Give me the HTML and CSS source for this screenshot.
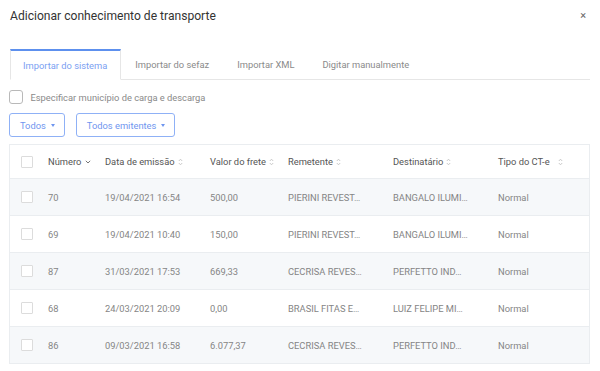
FILE: index.html
```html
<!DOCTYPE html>
<html lang="pt-BR">
<head>
<meta charset="utf-8">
<link rel="stylesheet" href="styles.css">
</head>
<body>
<div class="modal">
  <div class="modal-head">
    <h1 class="title">Adicionar conhecimento de transporte</h1>
    <span class="close">×</span>
  </div>
  <div class="tabs">
    <div class="tab active">Importar do sistema</div>
    <div class="tab">Importar do sefaz</div>
    <div class="tab">Importar XML</div>
    <div class="tab">Digitar manualmente</div>
    <div class="tab-fill"></div>
  </div>
  <label class="check-line"><span class="cb cb-lg"></span><span>Especificar município de carga e descarga</span></label>
  <div class="filters">
    <button class="btn">Todos <span class="caret"></span></button>
    <button class="btn">Todos emitentes <span class="caret"></span></button>
  </div>
  <div class="table">
    <div class="row head">
      <div class="cell c0"><span class="cb"></span></div>
      <div class="cell">Número <svg class="chev" width="6" height="4" viewBox="0 0 6 4"><path d="M0.8 0.8 L3 3 L5.2 0.8" fill="none" stroke="#666" stroke-width="0.9"/></svg></div>
      <div class="cell">Data de emissão <svg class="sort" width="5" height="8" viewBox="0 0 5 8"><path d="M0.8 3 L2.5 1.2 L4.2 3 M0.8 5 L2.5 6.8 L4.2 5" fill="none" stroke="#bdbdbd" stroke-width="0.8"/></svg></div>
      <div class="cell">Valor do frete <svg class="sort" width="5" height="8" viewBox="0 0 5 8"><path d="M0.8 3 L2.5 1.2 L4.2 3 M0.8 5 L2.5 6.8 L4.2 5" fill="none" stroke="#bdbdbd" stroke-width="0.8"/></svg></div>
      <div class="cell">Remetente <svg class="sort" width="5" height="8" viewBox="0 0 5 8"><path d="M0.8 3 L2.5 1.2 L4.2 3 M0.8 5 L2.5 6.8 L4.2 5" fill="none" stroke="#bdbdbd" stroke-width="0.8"/></svg></div>
      <div class="cell">Destinatário <svg class="sort" width="5" height="8" viewBox="0 0 5 8"><path d="M0.8 3 L2.5 1.2 L4.2 3 M0.8 5 L2.5 6.8 L4.2 5" fill="none" stroke="#bdbdbd" stroke-width="0.8"/></svg></div>
      <div class="cell">Tipo do CT-e <svg class="sort sort-wide" width="5" height="8" viewBox="0 0 5 8"><path d="M0.8 3 L2.5 1.2 L4.2 3 M0.8 5 L2.5 6.8 L4.2 5" fill="none" stroke="#bdbdbd" stroke-width="0.8"/></svg></div>
    </div>
    <div class="row odd">
      <div class="cell c0"><span class="cb"></span></div>
      <div class="cell">70</div><div class="cell">19/04/2021 16:54</div><div class="cell">500,00</div>
      <div class="cell">PIERINI REVEST…</div><div class="cell">BANGALO ILUMI…</div><div class="cell">Normal</div>
    </div>
    <div class="row">
      <div class="cell c0"><span class="cb"></span></div>
      <div class="cell">69</div><div class="cell">19/04/2021 10:40</div><div class="cell">150,00</div>
      <div class="cell">PIERINI REVEST…</div><div class="cell">BANGALO ILUMI…</div><div class="cell">Normal</div>
    </div>
    <div class="row odd">
      <div class="cell c0"><span class="cb"></span></div>
      <div class="cell">87</div><div class="cell">31/03/2021 17:53</div><div class="cell">669,33</div>
      <div class="cell">CECRISA REVES…</div><div class="cell">PERFETTO IND…</div><div class="cell">Normal</div>
    </div>
    <div class="row">
      <div class="cell c0"><span class="cb"></span></div>
      <div class="cell">68</div><div class="cell">24/03/2021 20:09</div><div class="cell">0,00</div>
      <div class="cell">BRASIL FITAS E…</div><div class="cell">LUIZ FELIPE MI…</div><div class="cell">Normal</div>
    </div>
    <div class="row odd">
      <div class="cell c0"><span class="cb"></span></div>
      <div class="cell">86</div><div class="cell">09/03/2021 16:58</div><div class="cell">6.077,37</div>
      <div class="cell">CECRISA REVES…</div><div class="cell">PERFETTO IND…</div><div class="cell">Normal</div>
    </div>
  </div>
</div>
</body>
</html>
```

FILE: styles.css
```css
* { box-sizing: border-box; }
html, body { margin: 0; padding: 0; background: #fff; }
body {
  font-family: Roboto, "Liberation Sans", sans-serif;
  font-size: 9.33px;
  color: #858585;
  width: 600px;
  height: 371px;
  overflow: hidden;
}
.modal { padding: 0 10px 0 9px; }
.modal-head {
  height: 32px;
  display: flex;
  align-items: center;
  justify-content: space-between;
  padding-left: 1px;
}
.title {
  margin: 0;
  font-size: 12.1px;
  font-weight: 400;
  color: #333;
}
.close {
  font-size: 11px;
  color: #666;
  margin-right: 4px;
  margin-top: -2px;
}
.tabs {
  display: flex;
  margin-top: 17px;
  margin-left: 1px;
  height: 31px;
}
.tab {
  padding: 0 14px;
  display: flex;
  align-items: center;
  color: #8a8a8a;
  border-bottom: 1px solid #e6e6e6;
  white-space: nowrap;
}
.tab.active {
  color: #7b9ff2;
  border-top: 2px solid #5d90ee;
  border-left: 1px solid #e6e6e6;
  border-right: 1px solid #e6e6e6;
  border-bottom: 1px solid transparent;
  padding: 0 13px 0 12px;
}
.tab-fill { flex: 1; border-bottom: 1px solid #e6e6e6; }
.check-line {
  display: flex;
  align-items: center;
  gap: 8px;
  margin-top: 10px;
  height: 14px;
  color: #8a8a8a;
}
.cb {
  display: inline-block;
  width: 12px;
  height: 12px;
  border: 1px solid #dcdcdc;
  border-radius: 1px;
  background: #fff;
}
.cb-lg {
  width: 13.5px;
  height: 13.5px;
  border-color: #b9b9b9;
  border-radius: 3px;
}
.filters {
  display: flex;
  gap: 11px;
  margin-top: 9px;
}
.btn {
  font: inherit;
  height: 24px;
  padding: 0 9px 0 10px;
  border: 1px solid #8fb1f6;
  border-radius: 3px;
  background: #fff;
  color: #6f96ef;
  display: flex;
  align-items: center;
  gap: 5px;
}
.caret {
  width: 0; height: 0;
  border-left: 2.5px solid transparent;
  border-right: 2.5px solid transparent;
  border-top: 3px solid #6f96ef;
}
.table {
  margin-top: 7px;
  border: 1px solid #eaedf0;
  width: 581px;
}
.row {
  display: grid;
  grid-template-columns: 28px 57px 105px 78px 105px 105px 1fr;
  height: 37px;
  align-items: center;
  border-top: 1px solid #eaedf0;
}
.row.head { height: 33px; border-top: none; }
.row.odd { background: #f6f8fa; }
.cell {
  padding-left: 10px;
  white-space: nowrap;
  display: flex;
  align-items: center;
  gap: 3px;
}
.cell.c0 { padding-left: 11px; }
.row.head .cell { color: #555; }
.sort { flex: none; }
.sort-wide { margin-left: 5px; }
.chev { margin-left: 1px; flex: none; }
```
